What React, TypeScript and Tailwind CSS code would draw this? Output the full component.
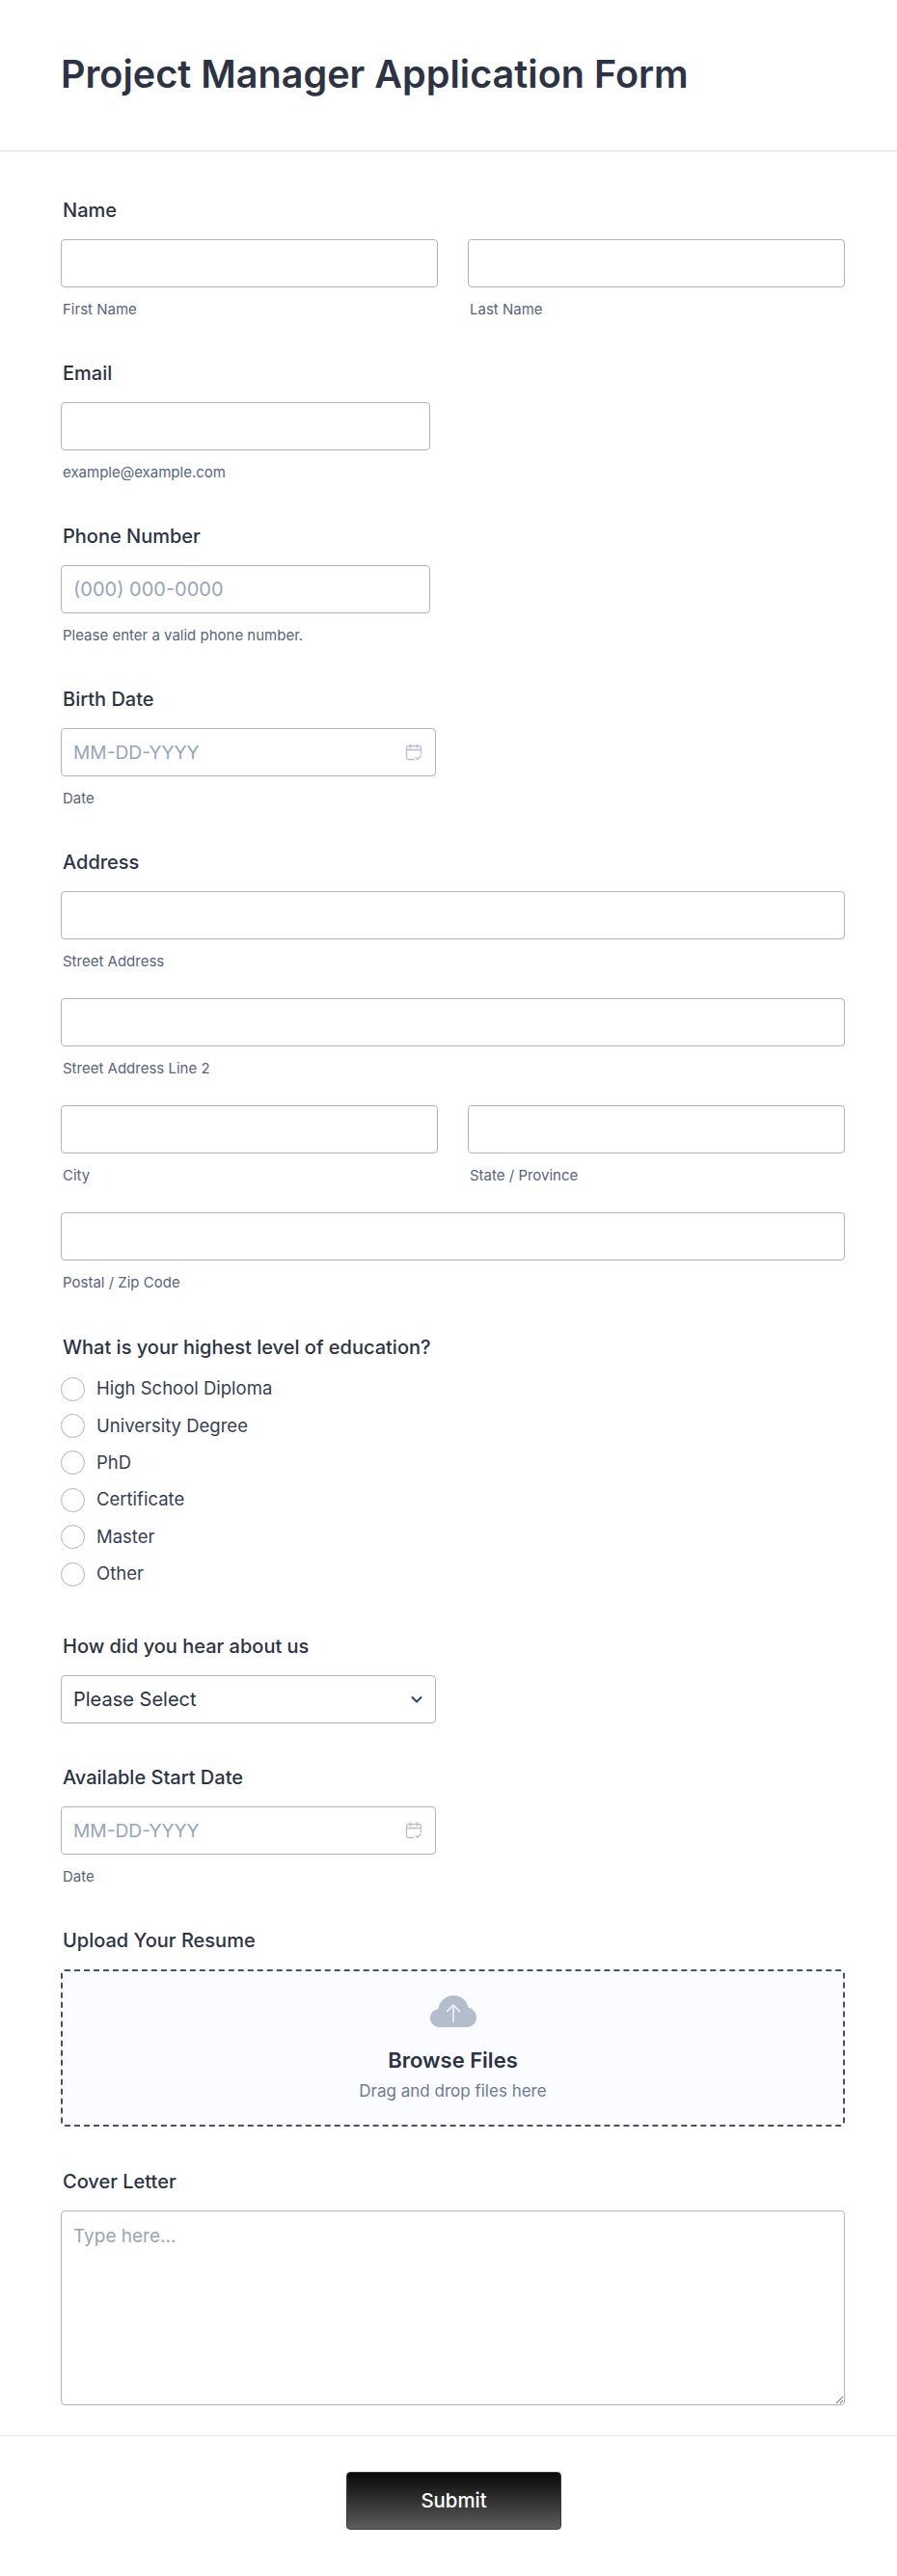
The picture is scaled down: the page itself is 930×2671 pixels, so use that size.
import type { ReactNode } from "react";

// campos de texto: mismo borde y radio en todo el formulario
const inputCls =
  "h-[50px] w-full rounded-[4px] border border-[#adb2c4] bg-white px-[12px] text-[20px] text-[#2c3345] outline-none placeholder:text-[#97a5ba]";

function Label({ children }: { children: ReactNode }) {
  return <div className="ml-[2px] mb-[16px] h-[28px] text-[20px] leading-[29px] font-medium text-[#2c3345]">{children}</div>;
}

function Sub({ children }: { children: ReactNode }) {
  return <div className="ml-[2px] mt-[13px] h-[19px] text-[15px] leading-[20px] text-[#57647e]">{children}</div>;
}

function CalendarIcon() {
  return (
    <svg viewBox="0 0 18 18" className="h-[18px] w-[18px]" fill="none" stroke="#b8bdc9" strokeWidth="1.3" strokeLinecap="round" strokeLinejoin="round">
      <path d="M9 16.5H3.5a2 2 0 0 1-2-2v-10a2 2 0 0 1 2-2h11a2 2 0 0 1 2 2v6" />
      <path d="M1.5 6.5h15" />
      <path d="M5.5 0.8v3.4M12.5 0.8v3.4" />
      <path d="M11 14.5l1.8 1.8 3.4-3.6" />
    </svg>
  );
}

function DateField({ label }: { label: string }) {
  return (
    <div className="mb-[43px]">
      <Label>{label}</Label>
      <div className="relative w-[389px]">
        <input className={`${inputCls} !text-[19.2px]`} placeholder="MM-DD-YYYY" />
        <div className="absolute right-[14px] top-[16px]">
          <CalendarIcon />
        </div>
      </div>
      <Sub>Date</Sub>
    </div>
  );
}

const educationOptions = ["High School Diploma", "University Degree", "PhD", "Certificate", "Master", "Other"];

export default function App() {
  return (
    <div className="min-h-[2671px] w-[930px] bg-white font-['Inter',sans-serif]">
      {/* Cabecera */}
      <div className="flex h-[157px] items-center border-b border-[#dcdee9] pb-[3px] pl-[63px]">
        <h1 className="text-[39.6px] leading-[48px] font-semibold text-[#2c3345]">Project Manager Application Form</h1>
      </div>

      <div className="pl-[63px] pr-[54px] pt-[47px]">
        <div className="mb-[43px]">
          <Label>Name</Label>
          <div className="grid grid-cols-2 gap-x-[31px]">
            <div>
              <input className={inputCls} />
              <Sub>First Name</Sub>
            </div>
            <div>
              <input className={inputCls} />
              <Sub>Last Name</Sub>
            </div>
          </div>
        </div>

        <div className="mb-[43px]">
          <Label>Email</Label>
          <input className={`${inputCls} !w-[383px]`} />
          <Sub>example@example.com</Sub>
        </div>

        <div className="mb-[43px]">
          <Label>Phone Number</Label>
          <input className={`${inputCls} !w-[383px]`} placeholder="(000) 000-0000" />
          <Sub>Please enter a valid phone number.</Sub>
        </div>

        <DateField label="Birth Date" />

        {/* Dirección */}
        <div className="mb-[44px]">
          <Label>Address</Label>
          <input className={inputCls} />
          <Sub>Street Address</Sub>
          <input className={`${inputCls} mt-[29px]`} />
          <Sub>Street Address Line 2</Sub>
          <div className="mt-[29px] grid grid-cols-2 gap-x-[31px]">
            <div>
              <input className={inputCls} />
              <Sub>City</Sub>
            </div>
            <div>
              <input className={inputCls} />
              <Sub>State / Province</Sub>
            </div>
          </div>
          <input className={`${inputCls} mt-[29px]`} />
          <Sub>Postal / Zip Code</Sub>
        </div>

        <div className="mb-[42px]">
          <div className="ml-[2px] mb-[10px] h-[28px] text-[20px] leading-[29px] font-medium text-[#2c3345]">
            What is your highest level of education?
          </div>
          {educationOptions.map((o) => (
            <div key={o} className="flex h-[38.4px] items-center">
              <span className="h-[25px] w-[25px] rounded-full border border-[#adb2c4] bg-white" />
              <span className="ml-[12px] text-[18.5px] text-[#363e55]">{o}</span>
            </div>
          ))}
        </div>

        <div className="mb-[42px]">
          <Label>How did you hear about us</Label>
          <div className="flex h-[50px] w-[389px] items-center justify-between rounded-[4px] border border-[#adb2c4] bg-white pl-[12px] pr-[12px] text-[20px] text-[#2c3345]">
            Please Select
            <svg viewBox="0 0 14 14" className="h-[14px] w-[14px]" fill="none" stroke="#343c6a" strokeWidth="2" strokeLinecap="round" strokeLinejoin="round">
              <path d="M2.5 5l4.5 4.5L11.5 5" />
            </svg>
          </div>
        </div>

        <DateField label="Available Start Date" />

        <div className="mb-[43px]">
          <Label>Upload Your Resume</Label>
          <div className="flex h-[163px] flex-col items-center rounded-[4px] border-2 border-dashed border-[#4a5068] bg-[#fbfcff] pt-[25px]">
            <svg viewBox="0 0 48 33" className="h-[33px] w-[48px]">
              <path
                d="M10 33C4.5 33 0 28.8 0 23.5 0 18.6 3.6 14.7 8.4 14.1 9.4 6.2 16 0 24.2 0c7.6 0 14 5.4 15.4 12.6C44.4 13.6 48 18 48 23c0 5.6-4.6 10-10.2 10H10z"
                fill="#b4bdce"
              />
              <path d="M24 27V10M17.5 16.5L24 10l6.5 6.5" fill="none" stroke="#fbfcff" strokeWidth="1.4" strokeLinecap="round" strokeLinejoin="round" />
            </svg>
            <div className="mt-[19px] text-[22px] leading-[30px] font-semibold text-[#2c3345]">Browse Files</div>
            <div className="mt-[5px] text-[17px] leading-[24px] text-[#6c7a96]">Drag and drop files here</div>
          </div>
        </div>

        <div>
          <Label>Cover Letter</Label>
          <textarea
            className="block h-[202px] w-full rounded-[4px] border border-[#adb2c4] bg-white px-[12px] py-[13px] text-[19px] leading-[26px] text-[#2c3345] outline-none placeholder:text-[#97a5ba]"
            placeholder="Type here..."
          />
        </div>
      </div>

      {/* Pie con botón */}
      <div className="mt-[31px] flex justify-center border-t border-[#e3e5ee] pl-[11px] pt-[37px]">
        <button className="h-[60px] w-[223px] rounded-[4px] border border-[#3a3a3a] bg-gradient-to-b from-[#0a0a0a] to-[#5e5e5e] text-[20.4px] font-medium text-white">
          Submit
        </button>
      </div>
    </div>
  );
}
